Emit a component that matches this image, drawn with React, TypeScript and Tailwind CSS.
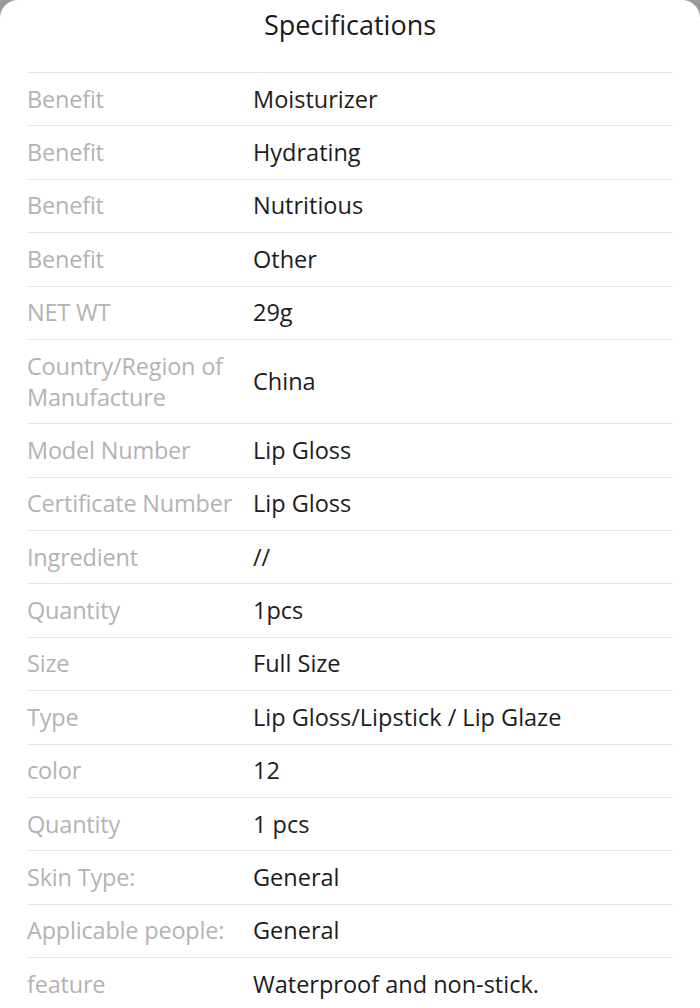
const specs: [string, string][] = [
  ["Benefit", "Moisturizer"],
  ["Benefit", "Hydrating"],
  ["Benefit", "Nutritious"],
  ["Benefit", "Other"],
  ["NET WT", "29g"],
  ["Country/Region of Manufacture", "China"],
  ["Model Number", "Lip Gloss"],
  ["Certificate Number", "Lip Gloss"],
  ["Ingredient", "//"],
  ["Quantity", "1pcs"],
  ["Size", "Full Size"],
  ["Type", "Lip Gloss/Lipstick / Lip Glaze"],
  ["color", "12"],
  ["Quantity", "1 pcs"],
  ["Skin Type:", "General"],
  ["Applicable people:", "General"],
  ["feature", "Waterproof and non-stick."],
];

export default function App() {
  return (
    <div className="w-[700px] h-[1008px] overflow-hidden bg-[#9a9a9a]" style={{ fontFamily: '"Open Sans", sans-serif' }}>
      <div className="h-full bg-white rounded-t-[18px]">
        <h1 className="h-[72px] pt-[6px] text-center text-[27px] leading-[38px] text-[#1a1a1a]">
          Specifications
        </h1>
        <div className="mx-[27px] border-t border-[#e6e6e6]">
          {specs.map(([label, value], i) => (
            <div key={i} className="flex items-center py-[10.7px] border-b border-[#e6e6e6] text-[23.5px] leading-[31px]">
              <div className="w-[226px] shrink-0 pr-1 text-[#b3b3b3] tracking-[-0.2px]">{label}</div>
              <div className="text-[#1c1c1c]">{value}</div>
            </div>
          ))}
        </div>
      </div>
    </div>
  );
}
